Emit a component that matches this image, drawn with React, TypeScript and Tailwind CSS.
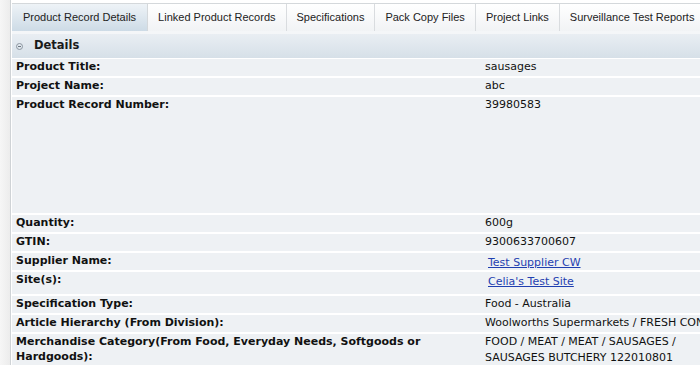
const TABS = [
  'Product Record Details',
  'Linked Product Records',
  'Specifications',
  'Pack Copy Files',
  'Project Links',
  'Surveillance Test Reports',
];

type Row = { label: string; value?: string; link?: boolean; h: string };

const ROWS: Row[] = [
  { label: 'Product Title:', value: 'sausages', h: 'h-[17px]' },
  { label: 'Project Name:', value: 'abc', h: 'h-[17px]' },
  { label: 'Product Record Number:', value: '39980583', h: 'h-[116px]' },
  { label: 'Quantity:', value: '600g', h: 'h-[17px]' },
  { label: 'GTIN:', value: '9300633700607', h: 'h-[17px]' },
  { label: 'Supplier Name:', value: 'Test Supplier CW', link: true, h: 'h-[17px]' },
  { label: 'Site(s):', value: "Celia's Test Site", link: true, h: 'h-[22px]' },
  { label: 'Specification Type:', value: 'Food - Australia', h: 'h-[17px]' },
  { label: 'Article Hierarchy (From Division):', value: 'Woolworths Supermarkets / FRESH CONVENIENCE', h: 'h-[17px]' },
  {
    label: 'Merchandise Category(From Food, Everyday Needs, Softgoods or Hardgoods):',
    value: 'FOOD / MEAT / MEAT / SAUSAGES / SAUSAGES BUTCHERY 122010801',
    h: 'h-[36px]',
  },
];

export default function App() {
  return (
    <div className="flex w-[700px] h-[365px] overflow-hidden bg-white font-['DejaVu_Sans',sans-serif] text-[11px] text-[#111]">
      {/* left gutter */}
      <div className="w-[11px] shrink-0 bg-gradient-to-r from-[#f6f6f6] to-[#ececec] border-r border-[#cfd3d6]" />
      <div className="flex-1 min-w-0 pl-[1px]">
        {/* tabs */}
        <div className="flex mt-[3px] h-[28px] border-t border-[#d4d8db] whitespace-nowrap font-['Liberation_Sans',sans-serif] text-[11px] text-[#222]">
          {TABS.map((t, i) => (
            <div
              key={t}
              className={
                i === 0
                  ? 'flex items-center px-[11px] border-r border-[#d4d8db] bg-gradient-to-b from-[#eef3f7] to-[#cddbe6]'
                  : 'flex items-center px-[10px] border-r border-[#d9dcdf] bg-gradient-to-b from-[#ffffff] to-[#f1f3f5]'
              }
            >
              {t}
            </div>
          ))}
        </div>
        <div className="h-[3px] bg-[#f4f6f8]" />
        {/* section header */}
        <div className="flex items-center h-[24px] bg-gradient-to-b from-[#e9eef3] to-[#d6e0e8]">
          <span className="ml-[4px] w-[7px] h-[7px] rounded-full border border-[#8c96a0] flex items-center justify-center">
            <span className="w-[3px] h-px bg-[#6c7680]" />
          </span>
          <span className="ml-[11px] font-bold text-[11.5px] text-[#1a1a1a]">Details</span>
        </div>
        {/* rows */}
        <div className="flex flex-col gap-[2px] pt-[1px]">
          {ROWS.map((r) => (
            <div key={r.label} className={`grid grid-cols-[469px_1fr] bg-[#eef1f4] ${r.h}`}>
              <div className="pl-[4px] font-bold leading-[15px] pr-[30px]">{r.label}</div>
              <div className="pl-[4px] leading-[15px] whitespace-nowrap overflow-hidden">
                {r.link ? (
                  <span className="ml-[3px] underline text-[#1f3fb0] inline-block pt-[2px]">{r.value}</span>
                ) : r.h === 'h-[36px]' ? (
                  <span className="inline-block leading-[16px]">
                    FOOD / MEAT / MEAT / SAUSAGES /
                    <br />
                    SAUSAGES BUTCHERY 122010801
                  </span>
                ) : (
                  r.value
                )}
              </div>
            </div>
          ))}
        </div>
      </div>
    </div>
  );
}
